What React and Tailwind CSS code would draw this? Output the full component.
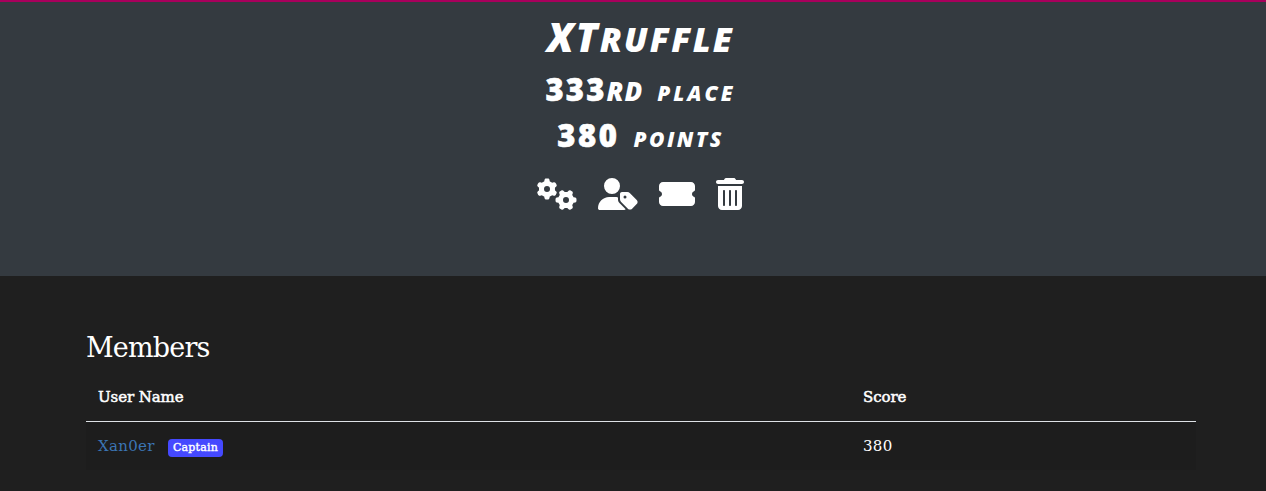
import { FaGears, FaUserTag, FaTicketSimple, FaTrashCan } from "react-icons/fa6";

const marker = "font-['Open_Sans',sans-serif] font-extrabold italic whitespace-nowrap";
const slab = "font-['DejaVu_Serif',serif]";

function Hero() {
  return (
    <header className="flex h-[276px] flex-col items-center border-t-2 border-[#a8005c] bg-[#343a40] pl-[15px] text-white">
      <h1 className={`${marker} mt-[9px] flex h-[52px] items-baseline leading-[52px]`}>
        <span className="text-[40px] tracking-[2px]">XT</span>
        <span className="text-[34px] tracking-[2.1px]">ruffle</span>
      </h1>
      <h2 className={`${marker} mt-[3px] flex h-[46px] items-baseline leading-[46px]`}>
        <span className="text-[31px] tracking-[2.2px] not-italic [-webkit-text-stroke:0.6px_white]">333</span>
        <span className="text-[26px] tracking-[1px] uppercase">rd</span>
        <span className="ml-[14px] text-[21px] tracking-[3px] uppercase">place</span>
      </h2>
      <h2 className={`${marker} flex h-[46px] items-baseline leading-[46px]`}>
        <span className="text-[31px] tracking-[2.6px] not-italic [-webkit-text-stroke:0.6px_white]">380</span>
        <span className="ml-[14px] text-[21px] tracking-[2.4px] uppercase">points</span>
      </h2>
      <nav className="mt-[20px] mr-px flex gap-[21px] pl-px">
        <FaGears className="h-8 w-10" />
        <FaUserTag className="h-8 w-10" />
        <FaTicketSimple className="h-8 w-9" />
        <FaTrashCan className="h-8 w-7" />
      </nav>
    </header>
  );
}

export default function App() {
  return (
    <div className="h-[491px] overflow-hidden bg-[#1f1f1f] [&_h1_span+span]:uppercase">
      <Hero />
      <main className={`${slab} ml-[86px] w-[1110px] pt-[54px] text-white`}>
        <h3 className="h-[42px] text-[27px] leading-[36px] tracking-[-0.8px]">Members</h3>
        <table className="w-full table-fixed text-left text-[15px]">
          <thead className="[-webkit-text-stroke:0.5px_white]">
            <tr className="h-[49px] border-b border-[#dee2e6]">
              <th className="w-[765px] px-3 pt-[1px] font-normal tracking-[-0.1px]">User Name</th>
              <th className="px-3 pt-[1px] font-normal tracking-[-0.1px]">Score</th>
            </tr>
          </thead>
          <tbody>
            <tr className="h-[49px] bg-[#1d1d1d]">
              <td className="px-3 pt-[1px]">
                <div className="flex items-center">
                  <a className="w-[57px] tracking-[0.3px] text-[#3b75b4]">Xan0er</a>
                  <span className="mt-[3px] ml-[13px] flex h-[18px] w-[55px] items-center justify-center rounded-[4px] bg-[#4549ff] text-[11px] tracking-[0.2px] [-webkit-text-stroke:0.4px_white]">
                    Captain
                  </span>
                </div>
              </td>
              <td className="px-3 pt-[1px] tracking-[0.3px]">380</td>
            </tr>
          </tbody>
        </table>
      </main>
    </div>
  );
}
